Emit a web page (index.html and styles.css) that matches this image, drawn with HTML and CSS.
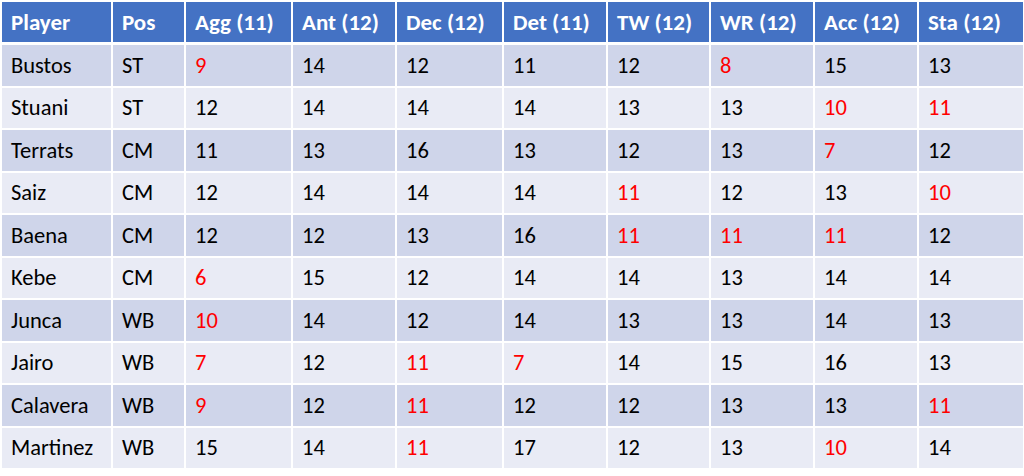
FILE: index.html
```html
<!DOCTYPE html>
<html lang="en">
<head>
<meta charset="utf-8">
<title>Player attributes</title>
<link rel="stylesheet" href="styles.css">
</head>
<body>
<div class="page">
<table class="stats">
<colgroup>
<col class="c-player"><col class="c-pos"><col class="c-wide"><col class="c-std"><col class="c-wide"><col class="c-std"><col class="c-tw"><col class="c-std"><col class="c-std"><col class="c-std">
</colgroup>
<thead>
<tr><th>Player</th><th>Pos</th><th>Agg (11)</th><th>Ant (12)</th><th>Dec (12)</th><th>Det (11)</th><th>TW (12)</th><th>WR (12)</th><th>Acc (12)</th><th>Sta (12)</th></tr>
</thead>
<tbody>
<tr><td>Bustos</td><td>ST</td><td class="low">9</td><td>14</td><td>12</td><td>11</td><td>12</td><td class="low">8</td><td>15</td><td>13</td></tr>
<tr><td>Stuani</td><td>ST</td><td>12</td><td>14</td><td>14</td><td>14</td><td>13</td><td>13</td><td class="low">10</td><td class="low">11</td></tr>
<tr><td>Terrats</td><td>CM</td><td>11</td><td>13</td><td>16</td><td>13</td><td>12</td><td>13</td><td class="low">7</td><td>12</td></tr>
<tr><td>Saiz</td><td>CM</td><td>12</td><td>14</td><td>14</td><td>14</td><td class="low">11</td><td>12</td><td>13</td><td class="low">10</td></tr>
<tr><td>Baena</td><td>CM</td><td>12</td><td>12</td><td>13</td><td>16</td><td class="low">11</td><td class="low">11</td><td class="low">11</td><td>12</td></tr>
<tr><td>Kebe</td><td>CM</td><td class="low">6</td><td>15</td><td>12</td><td>14</td><td>14</td><td>13</td><td>14</td><td>14</td></tr>
<tr><td>Junca</td><td>WB</td><td class="low">10</td><td>14</td><td>12</td><td>14</td><td>13</td><td>13</td><td>14</td><td>13</td></tr>
<tr><td>Jairo</td><td>WB</td><td class="low">7</td><td>12</td><td class="low">11</td><td class="low">7</td><td>14</td><td>15</td><td>16</td><td>13</td></tr>
<tr><td>Calavera</td><td>WB</td><td class="low">9</td><td>12</td><td class="low">11</td><td>12</td><td>12</td><td>13</td><td>13</td><td class="low">11</td></tr>
<tr><td>Martinez</td><td>WB</td><td>15</td><td>14</td><td class="low">11</td><td>17</td><td>12</td><td>13</td><td class="low">10</td><td>14</td></tr>
</tbody>
</table>
</div>
</body>
</html>
```

FILE: styles.css
```css
html, body {
  margin: 0;
  padding: 0;
  background: #ffffff;
}

.page {
  padding: 2px 0 0 2px;
}

.stats {
  width: 1020px;
  table-layout: fixed;
  border-collapse: separate;
  border-spacing: 0;
  font-family: Carlito, Lato, "Open Sans", sans-serif;
  font-size: 22.5px;
  color: #000000;
}

.c-player { width: 111px; }
.c-pos { width: 73px; }
.c-wide { width: 107px; }
.c-std { width: 104px; }
.c-tw { width: 103px; }

.stats th,
.stats td {
  text-align: left;
  vertical-align: middle;
  padding: 0 0 0 9px;
  border-right: 2px solid #ffffff;
  white-space: nowrap;
  overflow: hidden;
}

.stats th:last-child,
.stats td:last-child {
  border-right: none;
}

.stats thead tr {
  height: 43px;
}

.stats th {
  background: #4472c4;
  color: #ffffff;
  font-weight: 700;
  font-size: 23px;
  border-bottom: 3px solid #ffffff;
}

.stats tbody tr {
  height: 42.5px;
}

.stats td {
  border-bottom: 2px solid #ffffff;
}

.stats tbody tr:nth-child(odd) td {
  background: #cfd5ea;
}

.stats tbody tr:nth-child(even) td {
  background: #e9ebf5;
}

.stats td.low {
  color: #ff0000;
}
```
